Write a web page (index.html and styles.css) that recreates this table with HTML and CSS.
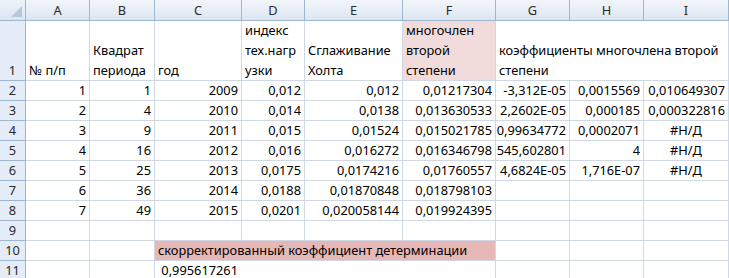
FILE: index.html
```html
<!DOCTYPE html>
<html>
<head>
<meta charset="utf-8">
<link rel="stylesheet" href="styles.css">
</head>
<body>
<div class="sheet">
  <div class="corner"><span class="tri"></span></div>
  <div class="ch">A</div><div class="ch">B</div><div class="ch">C</div><div class="ch">D</div><div class="ch">E</div><div class="ch">F</div><div class="ch">G</div><div class="ch">H</div><div class="ch">I</div>

  <div class="rh tall">1</div>
  <div class="c tall l">№ п/п</div>
  <div class="c tall l">Квадрат<br>периода</div>
  <div class="c tall l">год</div>
  <div class="c tall l">индекс<br>тех.нагр<br>узки</div>
  <div class="c tall l">Сглаживание<br>Холта</div>
  <div class="c tall l pink-light">многочлен<br>второй<br>степени</div>
  <div class="c tall l span3">коэффициенты многочлена второй<br>степени</div>

  <div class="rh">2</div>
  <div class="c">1</div><div class="c">1</div><div class="c">2009</div><div class="c">0,012</div><div class="c">0,012</div><div class="c">0,01217304</div><div class="c">-3,312E-05</div><div class="c">0,0015569</div><div class="c">0,010649307</div>

  <div class="rh">3</div>
  <div class="c">2</div><div class="c">4</div><div class="c">2010</div><div class="c">0,014</div><div class="c">0,0138</div><div class="c">0,013630533</div><div class="c">2,2602E-05</div><div class="c">0,000185</div><div class="c">0,000322816</div>

  <div class="rh">4</div>
  <div class="c">3</div><div class="c">9</div><div class="c">2011</div><div class="c">0,015</div><div class="c">0,01524</div><div class="c">0,015021785</div><div class="c">0,99634772</div><div class="c">0,0002071</div><div class="c m">#Н/Д</div>

  <div class="rh">5</div>
  <div class="c">4</div><div class="c">16</div><div class="c">2012</div><div class="c">0,016</div><div class="c">0,016272</div><div class="c">0,016346798</div><div class="c">545,602801</div><div class="c">4</div><div class="c m">#Н/Д</div>

  <div class="rh">6</div>
  <div class="c">5</div><div class="c">25</div><div class="c">2013</div><div class="c">0,0175</div><div class="c">0,0174216</div><div class="c">0,01760557</div><div class="c">4,6824E-05</div><div class="c">1,716E-07</div><div class="c m">#Н/Д</div>

  <div class="rh">7</div>
  <div class="c">6</div><div class="c">36</div><div class="c">2014</div><div class="c">0,0188</div><div class="c">0,01870848</div><div class="c">0,018798103</div><div class="c"></div><div class="c"></div><div class="c"></div>

  <div class="rh">8</div>
  <div class="c">7</div><div class="c">49</div><div class="c">2015</div><div class="c">0,0201</div><div class="c">0,020058144</div><div class="c">0,019924395</div><div class="c"></div><div class="c"></div><div class="c"></div>

  <div class="rh">9</div>
  <div class="c"></div><div class="c"></div><div class="c"></div><div class="c"></div><div class="c"></div><div class="c"></div><div class="c"></div><div class="c"></div><div class="c"></div>

  <div class="rh">10</div>
  <div class="c"></div><div class="c"></div>
  <div class="c l pink span4">скорректированный коэффициент детерминации</div>
  <div class="c"></div><div class="c"></div><div class="c"></div>

  <div class="rh">11</div>
  <div class="c"></div><div class="c"></div><div class="c nor">0,995617261</div><div class="c nor"></div><div class="c nor"></div><div class="c"></div><div class="c"></div><div class="c"></div><div class="c"></div>
</div>
</body>
</html>
```

FILE: styles.css
```css
html, body {
  margin: 0;
  padding: 0;
  background: #ffffff;
  overflow: hidden;
}

.sheet {
  display: grid;
  grid-template-columns: 26px 64px 65px 87px 63px 98px 93px 74px 74px 85px;
  grid-template-rows: 21px 60px repeat(10, 20px);
  width: 729px;
  font-family: "Noto Sans", "Liberation Sans", sans-serif;
  font-size: 12.8px;
  color: #000;
}

.corner {
  position: relative;
  background: linear-gradient(#eef3fa, #dce5f1);
  border-right: 1px solid #9eb6ce;
  border-bottom: 1px solid #9eb6ce;
}

.tri {
  position: absolute;
  right: 3px;
  bottom: 3px;
  width: 0;
  height: 0;
  border-left: 11px solid transparent;
  border-bottom: 11px solid #b8c8dc;
}

.ch {
  background: linear-gradient(#f2f6fb, #dce5f1);
  border-right: 1px solid #9eb6ce;
  border-bottom: 1px solid #9eb6ce;
  display: flex;
  align-items: center;
  justify-content: center;
  color: #2b2b2b;
  line-height: 20px;
}

.rh {
  background: #e4ecf7;
  border-right: 1px solid #9eb6ce;
  border-bottom: 1px solid #9eb6ce;
  display: flex;
  align-items: flex-end;
  justify-content: center;
  color: #2b2b2b;
  line-height: 19px;
}

.c {
  border-right: 1px solid #d0d7e5;
  border-bottom: 1px solid #d0d7e5;
  display: flex;
  flex-direction: column;
  justify-content: flex-end;
  align-items: flex-end;
  padding: 0 3px;
  line-height: 19px;
  white-space: nowrap;
  overflow: visible;
}

.c.l {
  align-items: flex-start;
}

.c.m {
  align-items: center;
}

.tall {
  display: flex;
  flex-direction: column;
  justify-content: flex-end;
  line-height: 20px;
}

.rh.tall {
  align-items: center;
}

.pink-light {
  background: #f2dcdb;
}

.pink {
  background: #e6b8b7;
}

.span3 {
  grid-column: span 3;
}

.span4 {
  grid-column: span 4;
}

.nor {
  border-right-color: transparent;
}
```
